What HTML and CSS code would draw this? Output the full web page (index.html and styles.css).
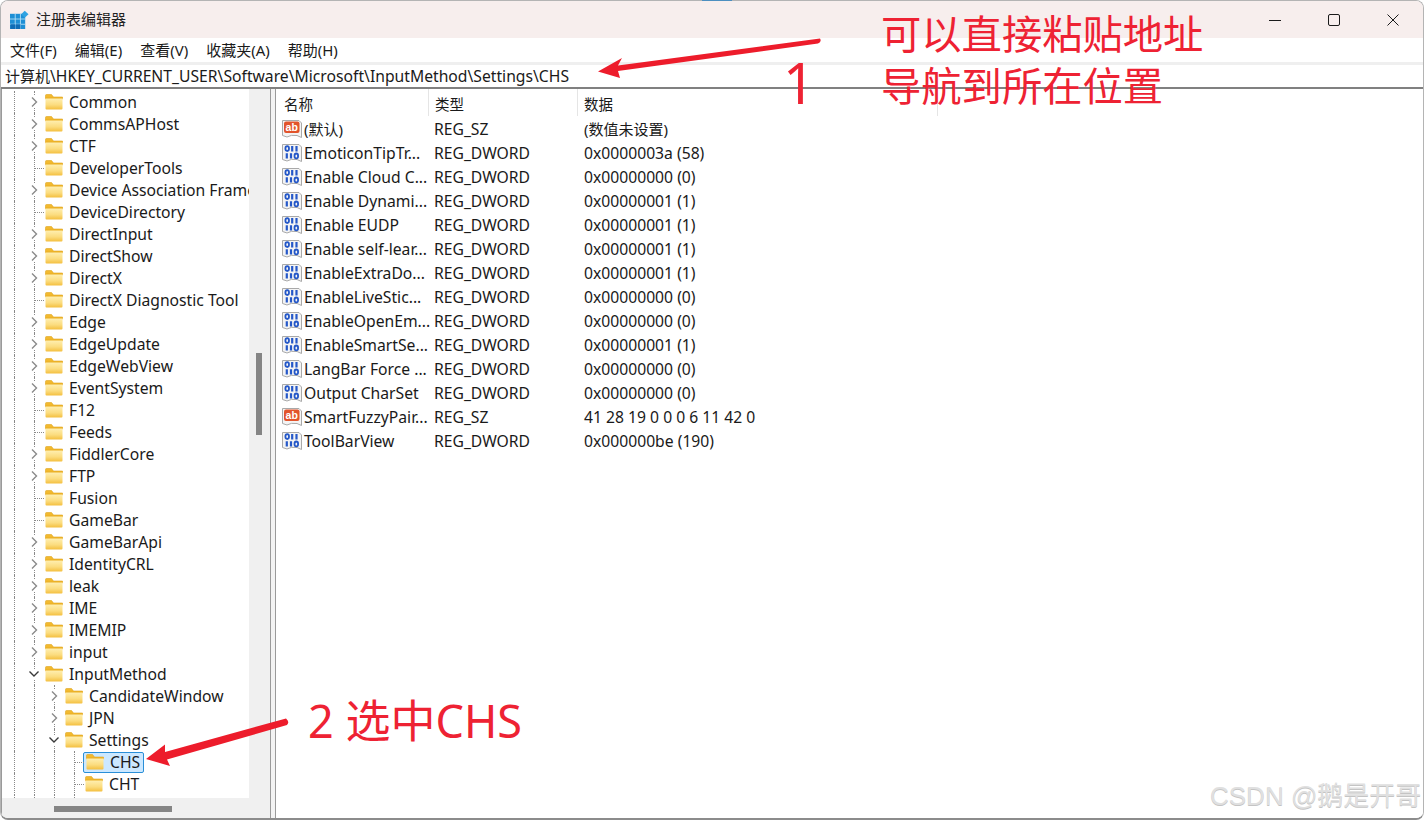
FILE: index.html
```html
<!DOCTYPE html>
<html lang="zh">
<head>
<meta charset="utf-8">
<title>注册表编辑器</title>
<link rel="stylesheet" href="styles.css">
</head>
<body>
<svg class="defs" width="0" height="0" aria-hidden="true">
  <defs>
    <linearGradient id="fold-body" x1="0" y1="0" x2="0" y2="1">
      <stop offset="0" stop-color="#fff0b4"/>
      <stop offset=".6" stop-color="#fbdc7e"/>
      <stop offset="1" stop-color="#f4bf3f"/>
    </linearGradient>
    <symbol id="folder" viewBox="0 0 18 16">
      <path d="M0.5 1.500Q0.5 .5 1.500 .5H6.500L8.500 3H17.500V5H.5Z" fill="#f2b92e" stroke="#dfa520" stroke-width=".6"/>
      <path d="M.5 4H17.500V14.500Q17.500 15.500 16.500 15.500H1.500Q.5 15.500 .5 14.500Z" fill="url(#fold-body)"/>
      <path d="M.5 4H17.500" stroke="#e9ad22" stroke-width="1"/>
    </symbol>
    <symbol id="chev-r" viewBox="0 0 10 12"><path d="M3 1.500L7.500 6L3 10.500" fill="none" stroke="#8a8a8a" stroke-width="1.400"/></symbol>
    <symbol id="chev-d" viewBox="0 0 12 10"><path d="M1.500 2.500L6 7L10.500 2.500" fill="none" stroke="#3a3a3a" stroke-width="1.400"/></symbol>
    <symbol id="reg-sz" viewBox="0 0 20 20">
      <path d="M.5 1.500H17L19.500 4V18.500L15 16.500Q9 15.500 5 18L.5 16.500Z" fill="#f4f4f4" stroke="#a9a9a9"/>
      <rect x="2" y="2.500" width="15.500" height="11.500" rx="2" fill="#e2542c"/>
      <text class="ab" x="9.700" y="12" text-anchor="middle">ab</text>
    </symbol>
    <symbol id="reg-bin" viewBox="0 0 20 20">
      <path d="M.5 1.500H17L19.500 4V18.500L15 16.500Q9 15.500 5 18L.5 16.500Z" fill="#f4f4f4" stroke="#a9a9a9"/>
      <ellipse cx="5.200" cy="5.600" rx="1.800" ry="2.400" fill="none" stroke="#2558c8" stroke-width="1.800"/>
      <path d="M10.200 3V8.400M14.500 3V8.400M4.800 10.200V15.600M9 10.200V15.600" stroke="#2558c8" stroke-width="2.200"/>
      <ellipse cx="14.300" cy="12.900" rx="1.800" ry="2.400" fill="none" stroke="#2558c8" stroke-width="1.800"/>
    </symbol>
  </defs>
</svg>

<div class="window">
  <header class="titlebar">
    <svg class="app-icon" viewBox="0 0 20 20" width="20" height="20" aria-hidden="true">
      <rect x="0" y="4" width="16" height="16" fill="#1e8fd5"/>
      <path d="M5.500 4V20M11 4V20M0 9.500H16M0 15H16" stroke="#b8e2f7" stroke-width=".9"/>
      <rect x="0.500" y="15" width="5" height="5" fill="#0f6cb5"/>
      <rect x="6" y="15" width="5" height="5" fill="#0f6cb5"/>
      <path d="M15.500 .8L19.500 4.500L15.500 8.200L11.800 4.500Z" fill="#2fa3e2"/>
    </svg>
    <span class="title">注册表编辑器</span>
    <div class="win-btns">
      <svg width="12" height="12" viewBox="0 0 12 12" aria-hidden="true"><path d="M0 6.500H12" stroke="#1a1a1a"/></svg>
      <svg width="12" height="12" viewBox="0 0 12 12" aria-hidden="true"><rect x=".5" y=".5" width="11" height="11" rx="1.500" fill="none" stroke="#1a1a1a"/></svg>
      <svg width="12" height="12" viewBox="0 0 12 12" aria-hidden="true"><path d="M.5 .5L11.500 11.500M11.500 .5L.5 11.500" stroke="#1a1a1a"/></svg>
    </div>
  </header>
  <nav class="menubar">
    <span>文件(F)</span><span>编辑(E)</span><span>查看(V)</span><span>收藏夹(A)</span><span>帮助(H)</span>
  </nav>
  <div class="address"><span class="cjk">计算机</span>\HKEY_CURRENT_USER\Software\Microsoft\InputMethod\Settings\CHS</div>

  <main class="panes">
    <section class="tree-pane">
      <div class="tree-top">
        <div class="tree">
          <div class="row"><i class="g"></i><i class="tw"><svg class="cr"><use href="#chev-r"/></svg></i><svg class="fd"><use href="#folder"/></svg><span>Common</span></div>
          <div class="row"><i class="g"></i><i class="tw"><svg class="cr"><use href="#chev-r"/></svg></i><svg class="fd"><use href="#folder"/></svg><span>CommsAPHost</span></div>
          <div class="row"><i class="g"></i><i class="tw"><svg class="cr"><use href="#chev-r"/></svg></i><svg class="fd"><use href="#folder"/></svg><span>CTF</span></div>
          <div class="row"><i class="g"></i><i class="tw leaf"></i><svg class="fd"><use href="#folder"/></svg><span>DeveloperTools</span></div>
          <div class="row"><i class="g"></i><i class="tw"><svg class="cr"><use href="#chev-r"/></svg></i><svg class="fd"><use href="#folder"/></svg><span>Device Association Framework</span></div>
          <div class="row"><i class="g"></i><i class="tw leaf"></i><svg class="fd"><use href="#folder"/></svg><span>DeviceDirectory</span></div>
          <div class="row"><i class="g"></i><i class="tw"><svg class="cr"><use href="#chev-r"/></svg></i><svg class="fd"><use href="#folder"/></svg><span>DirectInput</span></div>
          <div class="row"><i class="g"></i><i class="tw"><svg class="cr"><use href="#chev-r"/></svg></i><svg class="fd"><use href="#folder"/></svg><span>DirectShow</span></div>
          <div class="row"><i class="g"></i><i class="tw"><svg class="cr"><use href="#chev-r"/></svg></i><svg class="fd"><use href="#folder"/></svg><span>DirectX</span></div>
          <div class="row"><i class="g"></i><i class="tw leaf"></i><svg class="fd"><use href="#folder"/></svg><span>DirectX Diagnostic Tool</span></div>
          <div class="row"><i class="g"></i><i class="tw"><svg class="cr"><use href="#chev-r"/></svg></i><svg class="fd"><use href="#folder"/></svg><span>Edge</span></div>
          <div class="row"><i class="g"></i><i class="tw"><svg class="cr"><use href="#chev-r"/></svg></i><svg class="fd"><use href="#folder"/></svg><span>EdgeUpdate</span></div>
          <div class="row"><i class="g"></i><i class="tw"><svg class="cr"><use href="#chev-r"/></svg></i><svg class="fd"><use href="#folder"/></svg><span>EdgeWebView</span></div>
          <div class="row"><i class="g"></i><i class="tw"><svg class="cr"><use href="#chev-r"/></svg></i><svg class="fd"><use href="#folder"/></svg><span>EventSystem</span></div>
          <div class="row"><i class="g"></i><i class="tw leaf"></i><svg class="fd"><use href="#folder"/></svg><span>F12</span></div>
          <div class="row"><i class="g"></i><i class="tw leaf"></i><svg class="fd"><use href="#folder"/></svg><span>Feeds</span></div>
          <div class="row"><i class="g"></i><i class="tw"><svg class="cr"><use href="#chev-r"/></svg></i><svg class="fd"><use href="#folder"/></svg><span>FiddlerCore</span></div>
          <div class="row"><i class="g"></i><i class="tw"><svg class="cr"><use href="#chev-r"/></svg></i><svg class="fd"><use href="#folder"/></svg><span>FTP</span></div>
          <div class="row"><i class="g"></i><i class="tw leaf"></i><svg class="fd"><use href="#folder"/></svg><span>Fusion</span></div>
          <div class="row"><i class="g"></i><i class="tw leaf"></i><svg class="fd"><use href="#folder"/></svg><span>GameBar</span></div>
          <div class="row"><i class="g"></i><i class="tw"><svg class="cr"><use href="#chev-r"/></svg></i><svg class="fd"><use href="#folder"/></svg><span>GameBarApi</span></div>
          <div class="row"><i class="g"></i><i class="tw"><svg class="cr"><use href="#chev-r"/></svg></i><svg class="fd"><use href="#folder"/></svg><span>IdentityCRL</span></div>
          <div class="row"><i class="g"></i><i class="tw"><svg class="cr"><use href="#chev-r"/></svg></i><svg class="fd"><use href="#folder"/></svg><span>leak</span></div>
          <div class="row"><i class="g"></i><i class="tw"><svg class="cr"><use href="#chev-r"/></svg></i><svg class="fd"><use href="#folder"/></svg><span>IME</span></div>
          <div class="row"><i class="g"></i><i class="tw"><svg class="cr"><use href="#chev-r"/></svg></i><svg class="fd"><use href="#folder"/></svg><span>IMEMIP</span></div>
          <div class="row"><i class="g"></i><i class="tw"><svg class="cr"><use href="#chev-r"/></svg></i><svg class="fd"><use href="#folder"/></svg><span>input</span></div>
          <div class="row"><i class="g"></i><i class="tw"><svg class="cd"><use href="#chev-d"/></svg></i><svg class="fd"><use href="#folder"/></svg><span>InputMethod</span></div>
          <div class="row"><i class="g"></i><i class="g"></i><i class="tw"><svg class="cr"><use href="#chev-r"/></svg></i><svg class="fd"><use href="#folder"/></svg><span>CandidateWindow</span></div>
          <div class="row"><i class="g"></i><i class="g"></i><i class="tw"><svg class="cr"><use href="#chev-r"/></svg></i><svg class="fd"><use href="#folder"/></svg><span>JPN</span></div>
          <div class="row"><i class="g"></i><i class="g"></i><i class="tw"><svg class="cd"><use href="#chev-d"/></svg></i><svg class="fd"><use href="#folder"/></svg><span>Settings</span></div>
          <div class="row"><i class="g"></i><i class="g"></i><i class="g"></i><i class="tw leaf"></i><div class="selected"><svg class="fd"><use href="#folder"/></svg><span>CHS</span></div></div>
          <div class="row"><i class="g"></i><i class="g"></i><i class="g"></i><i class="tw leaf"></i><svg class="fd"><use href="#folder"/></svg><span>CHT</span></div>
          <div class="row tail"><i class="g"></i><i class="g"></i><i class="g"></i><i class="g"></i></div>
        </div>
        <div class="vscroll"><div class="vthumb"></div></div>
      </div>
      <div class="hscroll"><div class="hthumb"></div></div>
    </section>
    <div class="splitter"></div>
    <section class="list-pane">
      <div class="list-head">
        <div class="hc c1">名称</div><div class="hc c2">类型</div><div class="hc c3">数据</div>
      </div>
      <div class="item"><svg class="ic"><use href="#reg-sz"/></svg><span class="n cjk">(默认)</span><span class="t">REG_SZ</span><span class="cjk">(数值未设置)</span></div>
      <div class="item"><svg class="ic"><use href="#reg-bin"/></svg><span class="n">EmoticonTipTr...</span><span class="t">REG_DWORD</span><span>0x0000003a (58)</span></div>
      <div class="item"><svg class="ic"><use href="#reg-bin"/></svg><span class="n">Enable Cloud C...</span><span class="t">REG_DWORD</span><span>0x00000000 (0)</span></div>
      <div class="item"><svg class="ic"><use href="#reg-bin"/></svg><span class="n">Enable Dynami...</span><span class="t">REG_DWORD</span><span>0x00000001 (1)</span></div>
      <div class="item"><svg class="ic"><use href="#reg-bin"/></svg><span class="n">Enable EUDP</span><span class="t">REG_DWORD</span><span>0x00000001 (1)</span></div>
      <div class="item"><svg class="ic"><use href="#reg-bin"/></svg><span class="n">Enable self-lear...</span><span class="t">REG_DWORD</span><span>0x00000001 (1)</span></div>
      <div class="item"><svg class="ic"><use href="#reg-bin"/></svg><span class="n">EnableExtraDo...</span><span class="t">REG_DWORD</span><span>0x00000001 (1)</span></div>
      <div class="item"><svg class="ic"><use href="#reg-bin"/></svg><span class="n">EnableLiveStic...</span><span class="t">REG_DWORD</span><span>0x00000000 (0)</span></div>
      <div class="item"><svg class="ic"><use href="#reg-bin"/></svg><span class="n">EnableOpenEm...</span><span class="t">REG_DWORD</span><span>0x00000000 (0)</span></div>
      <div class="item"><svg class="ic"><use href="#reg-bin"/></svg><span class="n">EnableSmartSe...</span><span class="t">REG_DWORD</span><span>0x00000001 (1)</span></div>
      <div class="item"><svg class="ic"><use href="#reg-bin"/></svg><span class="n">LangBar Force ...</span><span class="t">REG_DWORD</span><span>0x00000000 (0)</span></div>
      <div class="item"><svg class="ic"><use href="#reg-bin"/></svg><span class="n">Output CharSet</span><span class="t">REG_DWORD</span><span>0x00000000 (0)</span></div>
      <div class="item"><svg class="ic"><use href="#reg-sz"/></svg><span class="n">SmartFuzzyPair...</span><span class="t">REG_SZ</span><span>41 28 19 0 0 0 6 11 42 0</span></div>
      <div class="item"><svg class="ic"><use href="#reg-bin"/></svg><span class="n">ToolBarView</span><span class="t">REG_DWORD</span><span>0x000000be (190)</span></div>
    </section>
  </main>
</div>

<div class="sliver"></div>
<svg class="arrows" width="1424" height="822" viewBox="0 0 1424 822" aria-hidden="true">
  <path d="M820 38.500Q822 42 818 43.500L618 71L620 78L598 71.500L622 58L618 65.500Z" fill="#ed1c2b"/>
  <path d="M286 718.500Q290 722 287 725L167 759.500L170 766L146 759L165 744.500L165 752Z" fill="#ed1c2b"/>
</svg>
<div class="note note-a">可以直接粘贴地址<br>导航到所在位置</div>
<div class="note note-1">1</div>
<div class="note note-2">2 选中CHS</div>
<div class="watermark">CSDN @鹅是开哥</div>
</body>
</html>
```
FILE: styles.css
```css
* { box-sizing: border-box; }
html, body { margin: 0; padding: 0; }
body {
  width: 1424px;
  height: 822px;
  overflow: hidden;
  background: #fff;
  font-family: "Noto Sans", "Noto Sans CJK SC", sans-serif;
  font-size: 15.700px;
  color: #1a1a1a;
  position: relative;
}
.defs { position: absolute; }
.cjk { font-size: 15px; }
.ab { font: bold 10.500px "Liberation Sans", sans-serif; fill: #fff; }

.window {
  height: 820px;
  display: flex;
  flex-direction: column;
  background: #fff;
  border: 1px solid #b4b4b4;
  border-bottom: 2px solid #8c8c8c;
  border-radius: 8px;
  overflow: hidden;
}
.sliver {
  position: absolute;
  left: 702px;
  top: 0;
  width: 30px;
  height: 1px;
  background: #4c8fc0;
}
.titlebar {
  flex: 0 0 37px;
  display: flex;
  align-items: center;
  background: #f7eeed;
  padding-left: 9px;
}
.app-icon { width: 19px; height: 19px; }
.title {
  margin: 0 0 2px 7px;
  font-size: 15px;
  line-height: 20px;
  color: #222;
}
.win-btns {
  margin-left: auto;
  display: flex;
  gap: 47px;
  padding-right: 24px;
}
.menubar {
  flex: 0 0 24px;
  display: flex;
  align-items: center;
  gap: 18px;
  padding: 0 0 2px 9px;
  font-size: 15px;
  background: #fff;
}
.address {
  flex: 0 0 27px;
  border-top: 3px solid #efefef;
  border-bottom: 2px solid #808080;
  padding-left: 4px;
  line-height: 22px;
  white-space: nowrap;
}

.panes { flex: 1; display: flex; min-height: 0; }

.tree-pane {
  width: 269px;
  display: flex;
  flex-direction: column;
  background: #f0f0f0;
  border-left: 1px solid #9a9a9a;
}
.tree-top { flex: 1; display: flex; min-height: 0; }
.tree {
  width: 247px;
  background: #fff;
  overflow: hidden;
  padding-top: 2px;
}
.row {
  height: 22px;
  display: flex;
  align-items: center;
  white-space: nowrap;
  padding-left: 2px;
  line-height: 22px;
}
.row span { margin-left: 6px; }
.g, .tw {
  flex: 0 0 20px;
  width: 20px;
  height: 22px;
  position: relative;
  display: flex;
  align-items: center;
  justify-content: center;
}
.g::before, .tw::before {
  content: "";
  position: absolute;
  left: 10px;
  top: 0;
  bottom: 0;
  border-left: 1px dotted #8a8a8a;
}
.leaf::after {
  content: "";
  position: absolute;
  left: 11px;
  right: 0;
  top: 11px;
  border-top: 1px dotted #8a8a8a;
}
.cr, .cd { position: relative; background: #fff; }
.cr { width: 10px; height: 12px; }
.cd { width: 12px; height: 10px; }
.fd { flex: 0 0 18px; width: 18px; height: 16px; margin-left: 1px; }
.tail { height: 3px; overflow: hidden; }
.selected {
  display: flex;
  align-items: center;
  height: 21px;
  width: 61px;
  margin-left: -1px;
  padding-left: 1px;
  background: #cce8ff;
  border: 1px solid #2a8fd8;
  border-radius: 2px;
}
.selected span { margin-left: 6px; }

.vscroll { flex: 1; padding: 264px 0 0 7px; }
.vthumb { width: 6px; height: 82px; background: #858585; }
.hscroll { flex: 0 0 20px; padding: 8px 0 0 52px; }
.hthumb { width: 118px; height: 6px; background: #858585; }

.splitter {
  width: 6px;
  background: #f3f3f3;
  border-left: 1px solid #9a9a9a;
  border-right: 1px solid #9a9a9a;
}

.list-pane { flex: 1; background: #fff; }
.list-head { display: flex; height: 28px; padding-left: 2px; }
.hc { padding-left: 6px; line-height: 30px; font-size: 14.500px; height: 27px; border-right: 1px solid #e5e5e5; }
.c1 { width: 151px; }
.c2 { width: 149px; }
.c3 { width: 360px; }
.item {
  display: flex;
  align-items: center;
  height: 24px;
  padding-left: 6px;
  white-space: nowrap;
  line-height: 24px;
}
.ic { flex: 0 0 20px; width: 20px; height: 20px; }
.n { width: 130px; margin-left: 2px; }
.t { width: 150px; }

.arrows { position: absolute; left: 0; top: 0; pointer-events: none; }
.note {
  position: absolute;
  color: #ee2233;
  font-weight: 400;
  white-space: nowrap;
}
.note-a { left: 881px; top: 8px; font-size: 40.300px; line-height: 52px; }
.note-1 { left: 783px; top: 46px; font-size: 56px; line-height: 72px; }
.note-2 { left: 308px; top: 691px; font-size: 45px; line-height: 60px; }
.watermark {
  position: absolute;
  left: 1210px;
  top: 778px;
  font-size: 26px;
  line-height: 36px;
  color: #e0e0e0;
  text-shadow: 0 1px 0 #c4c4c4;
  white-space: nowrap;
  font-family: "Liberation Sans", "Noto Sans CJK SC", sans-serif;
}
```
